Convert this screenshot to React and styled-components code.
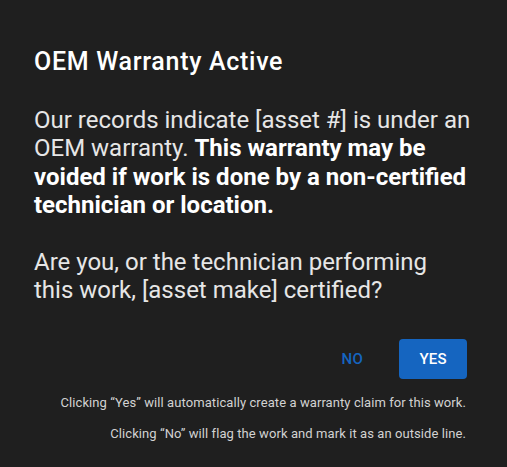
import React from 'react';
import styled, { createGlobalStyle } from 'styled-components';

const GlobalStyle = createGlobalStyle`
	body {
		margin: 0;
		background: #1f1f1f;
		font-family: Roboto, "Liberation Sans", sans-serif;
	}
`;

const Dialog = styled.div`
	width: 507px;
	height: 467px;
	box-sizing: border-box;
	padding: 47px 40px 0 34px;
	background: #1f1f1f;
	display: flex;
	flex-direction: column;
`;

const Title = styled.h2`
	margin: 0;
	font-size: 25px;
	line-height: 30px;
	font-weight: 500;
	letter-spacing: 0.7px;
	color: #ffffff;
`;

const Body = styled.div`
	margin-top: 28.5px;
	margin-right: -17px;
	display: flex;
	flex-direction: column;
	gap: 28px;
`;

const Para = styled.p`
	margin: 0;
	font-size: 24px;
	line-height: 28.5px;
	color: #e6e6e6;

	strong {
		font-weight: 700;
		color: #ffffff;
	}
`;

const Actions = styled.div`
	margin-top: 34px;
	display: flex;
	justify-content: flex-end;
	align-items: center;
	gap: 15px;
`;

const Button = styled.button`
	min-width: 64px;
	height: 40px;
	border: none;
	border-radius: 4px;
	font-family: Roboto, "Liberation Sans", sans-serif;
	font-size: 15px;
	font-weight: 500;
	letter-spacing: 0.02em;
	cursor: pointer;
	background: ${(p) => (p.$primary ? '#1565c0' : 'transparent')};
	color: ${(p) => (p.$primary ? '#ffffff' : '#1565c0')};
	padding: ${(p) => (p.$primary ? '0 20px' : '0 8px')};
`;

const Notes = styled.div`
	margin-top: 16px;
	display: flex;
	flex-direction: column;
	align-items: flex-end;
	gap: 15px;
	padding-right: 1px;
`;

const Note = styled.div`
	font-size: 13px;
	line-height: 16px;
	letter-spacing: 0.08px;
	color: #d2d2d2;
`;

function App() {
	return (
		<>
			<GlobalStyle />
			<Dialog>
				<Title>OEM Warranty Active</Title>
				<Body>
					<Para>
						Our records indicate [asset #] is under an OEM warranty.{' '}
						<strong>This warranty may be voided if work is done by a non-certified technician or location.</strong>
					</Para>
					<Para>
						Are you, or the technician performing
						<br />
						this work, [asset make] certified?
					</Para>
				</Body>
				<Actions>
					<Button>NO</Button>
					<Button $primary>YES</Button>
				</Actions>
				<Notes>
					<Note>Clicking “Yes” will automatically create a warranty claim for this work.</Note>
					<Note>Clicking “No” will flag the work and mark it as an outside line.</Note>
				</Notes>
			</Dialog>
		</>
	);
}

export default App;
